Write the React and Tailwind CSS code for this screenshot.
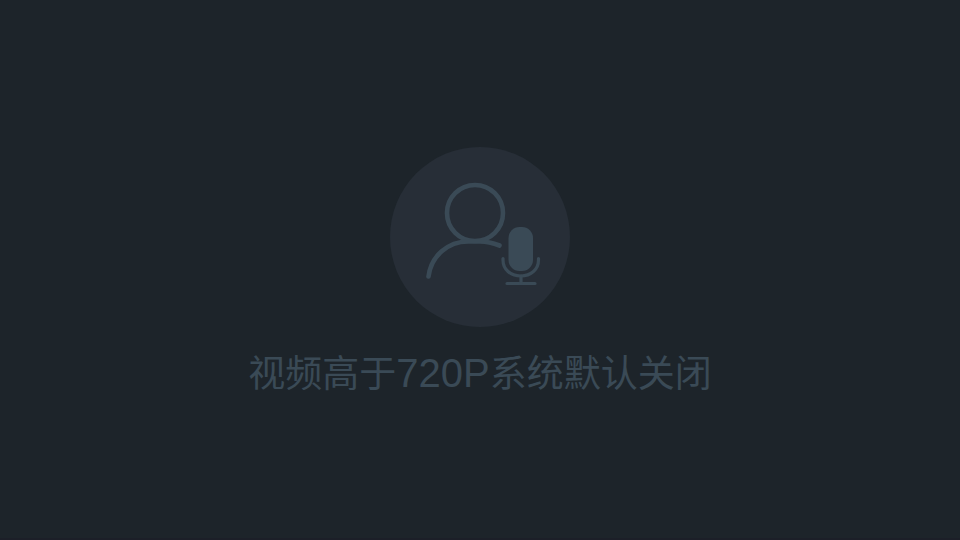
export default function App() {
  return (
    <main className="flex min-h-screen flex-col items-center justify-center border-b-2 border-[#1c1f28] bg-[#1d242a] pt-1.5 font-['Liberation_Sans','Noto_Sans_CJK_SC',sans-serif]">
      <div className="flex size-[180px] items-center justify-center rounded-full bg-[#272e37]">
        <svg viewBox="0 0 180 180" className="size-full" fill="none" stroke="#3a4a56" strokeLinecap="round" aria-hidden="true">
          <circle cx="85" cy="66" r="28" strokeWidth="4.6" />
          <path d="M38.5 129.5C41 109 58 94.5 78 94.5H90C97 94.5 103 96 109.5 98.5" strokeWidth="4.6" />
          <rect x="118.5" y="80" width="24.5" height="44" rx="11" fill="#3a4a56" stroke="none" />
          <path d="M113 111.5V113C113 122.5 120.5 129 130.7 129S148.500 122.500 148.500 113V111.500M117 136.500H145" strokeWidth="3.2" />
          <path d="M131 129V136" strokeWidth="3.2" />
        </svg>
      </div>
      <p className="mt-6 whitespace-nowrap text-[37px] leading-11 text-[#3a4a56]">
        视频高于<span className="text-[40px]">720P</span>系统默认关闭
      </p>
    </main>
  );
}
